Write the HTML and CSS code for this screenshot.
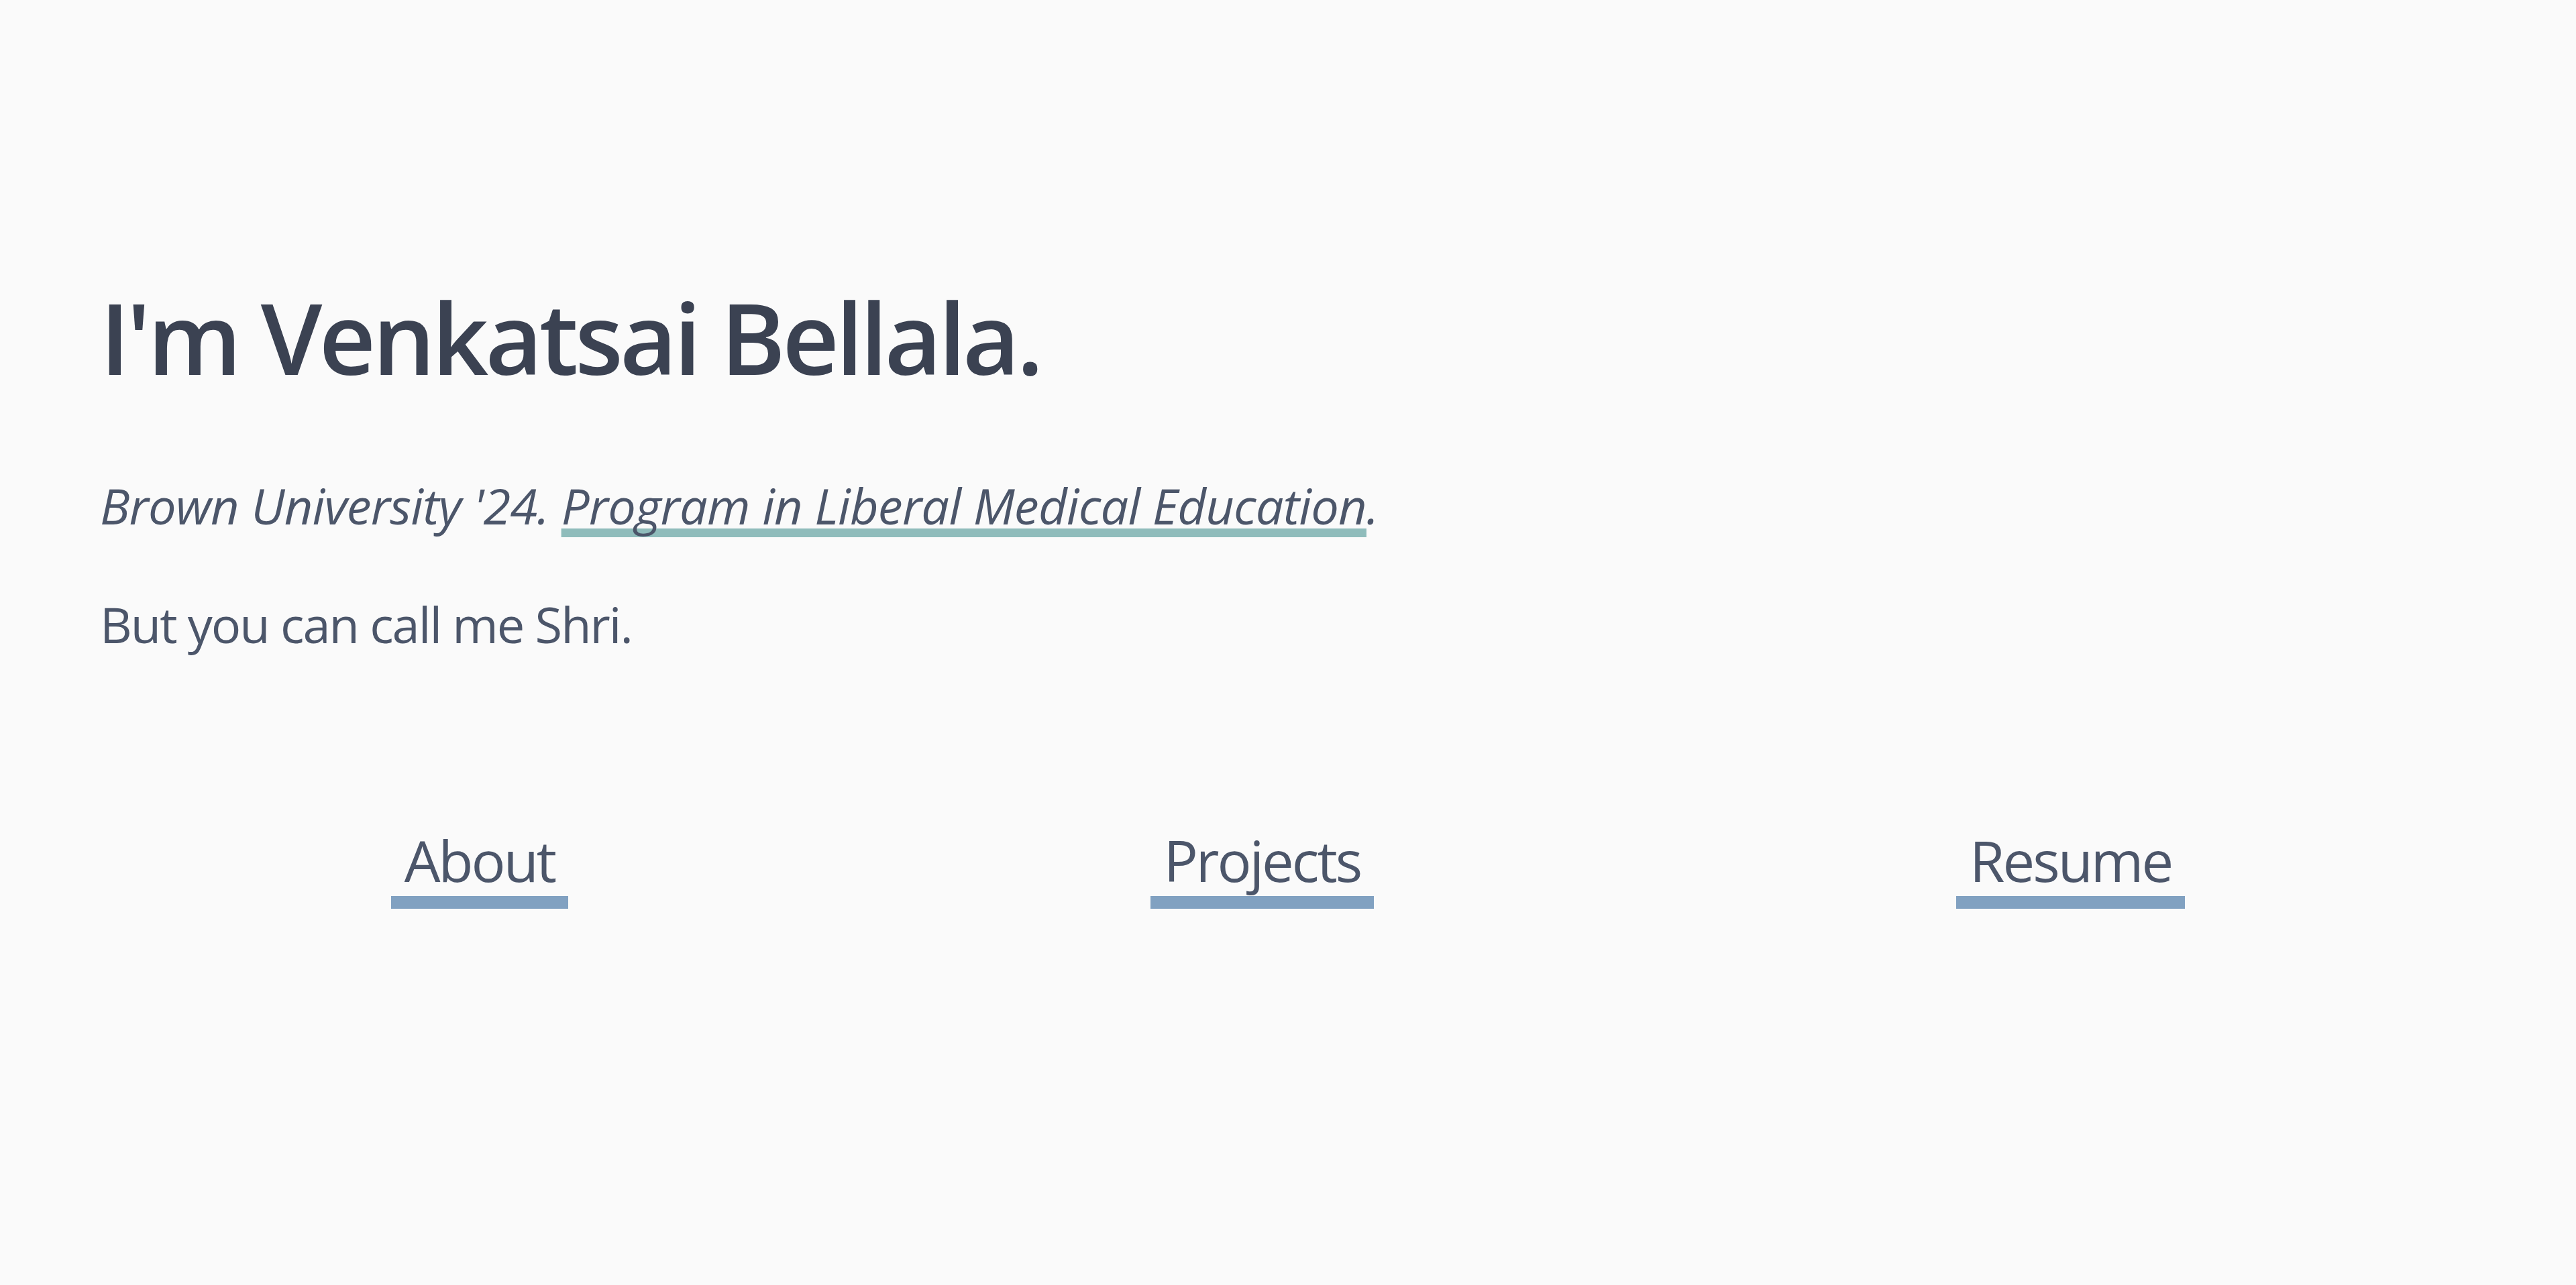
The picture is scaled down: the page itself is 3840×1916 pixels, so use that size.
FILE: index.html
```html
<!DOCTYPE html>
<html lang="en">
<head>
<meta charset="utf-8">
<title>Venkatsai Bellala</title>
<link rel="stylesheet" href="styles.css">
</head>
<body>
<main class="page">
  <section class="intro">
    <h1 class="title">I'm Venkatsai Bellala.</h1>
    <p class="subtitle">Brown University '24. <a class="plme" href="#">Program in Liberal Medical Education</a>.</p>
    <p class="nickname">But you can call me Shri.</p>
  </section>
  <nav class="nav">
    <a class="nav-link" href="#">About</a>
    <a class="nav-link" href="#">Projects</a>
    <a class="nav-link" href="#">Resume</a>
  </nav>
</main>
</body>
</html>
```
FILE: styles.css
```css
html, body {
  margin: 0;
  padding: 0;
  background: #fafafa;
}
body {
  font-family: "Open Sans", "Noto Sans", sans-serif;
  color: #4c566a;
}
.page {
  display: flex;
  flex-direction: column;
  padding: 414px 149px 0 149px;
}
.intro {
  display: flex;
  flex-direction: column;
}
.title {
  margin: 0;
  font-size: 147px;
  line-height: 1.2;
  font-weight: 600;
  color: #3b4252;
  letter-spacing: -4.8px;
}
.subtitle {
  margin: 108px 0 0 0;
  font-size: 74px;
  line-height: 1.5;
  font-style: italic;
  letter-spacing: -0.8px;
}
.plme {
  color: inherit;
  text-decoration: underline;
  text-decoration-color: #8fbcbb;
  text-decoration-thickness: 13px;
  text-underline-offset: 6px;
  text-decoration-skip-ink: none;
}
.nickname {
  margin: 66px 0 0 0;
  font-size: 74px;
  line-height: 1.5;
  letter-spacing: -2px;
}
.nav {
  display: flex;
  justify-content: space-around;
  margin-top: 245px;
}
.nav-link {
  font-size: 85px;
  line-height: 1.2;
  color: #4c566a;
  text-decoration: none;
  padding: 0 20px 3px 20px;
  border-bottom: 19px solid #81a1c1;
  letter-spacing: -3px;
}
```
